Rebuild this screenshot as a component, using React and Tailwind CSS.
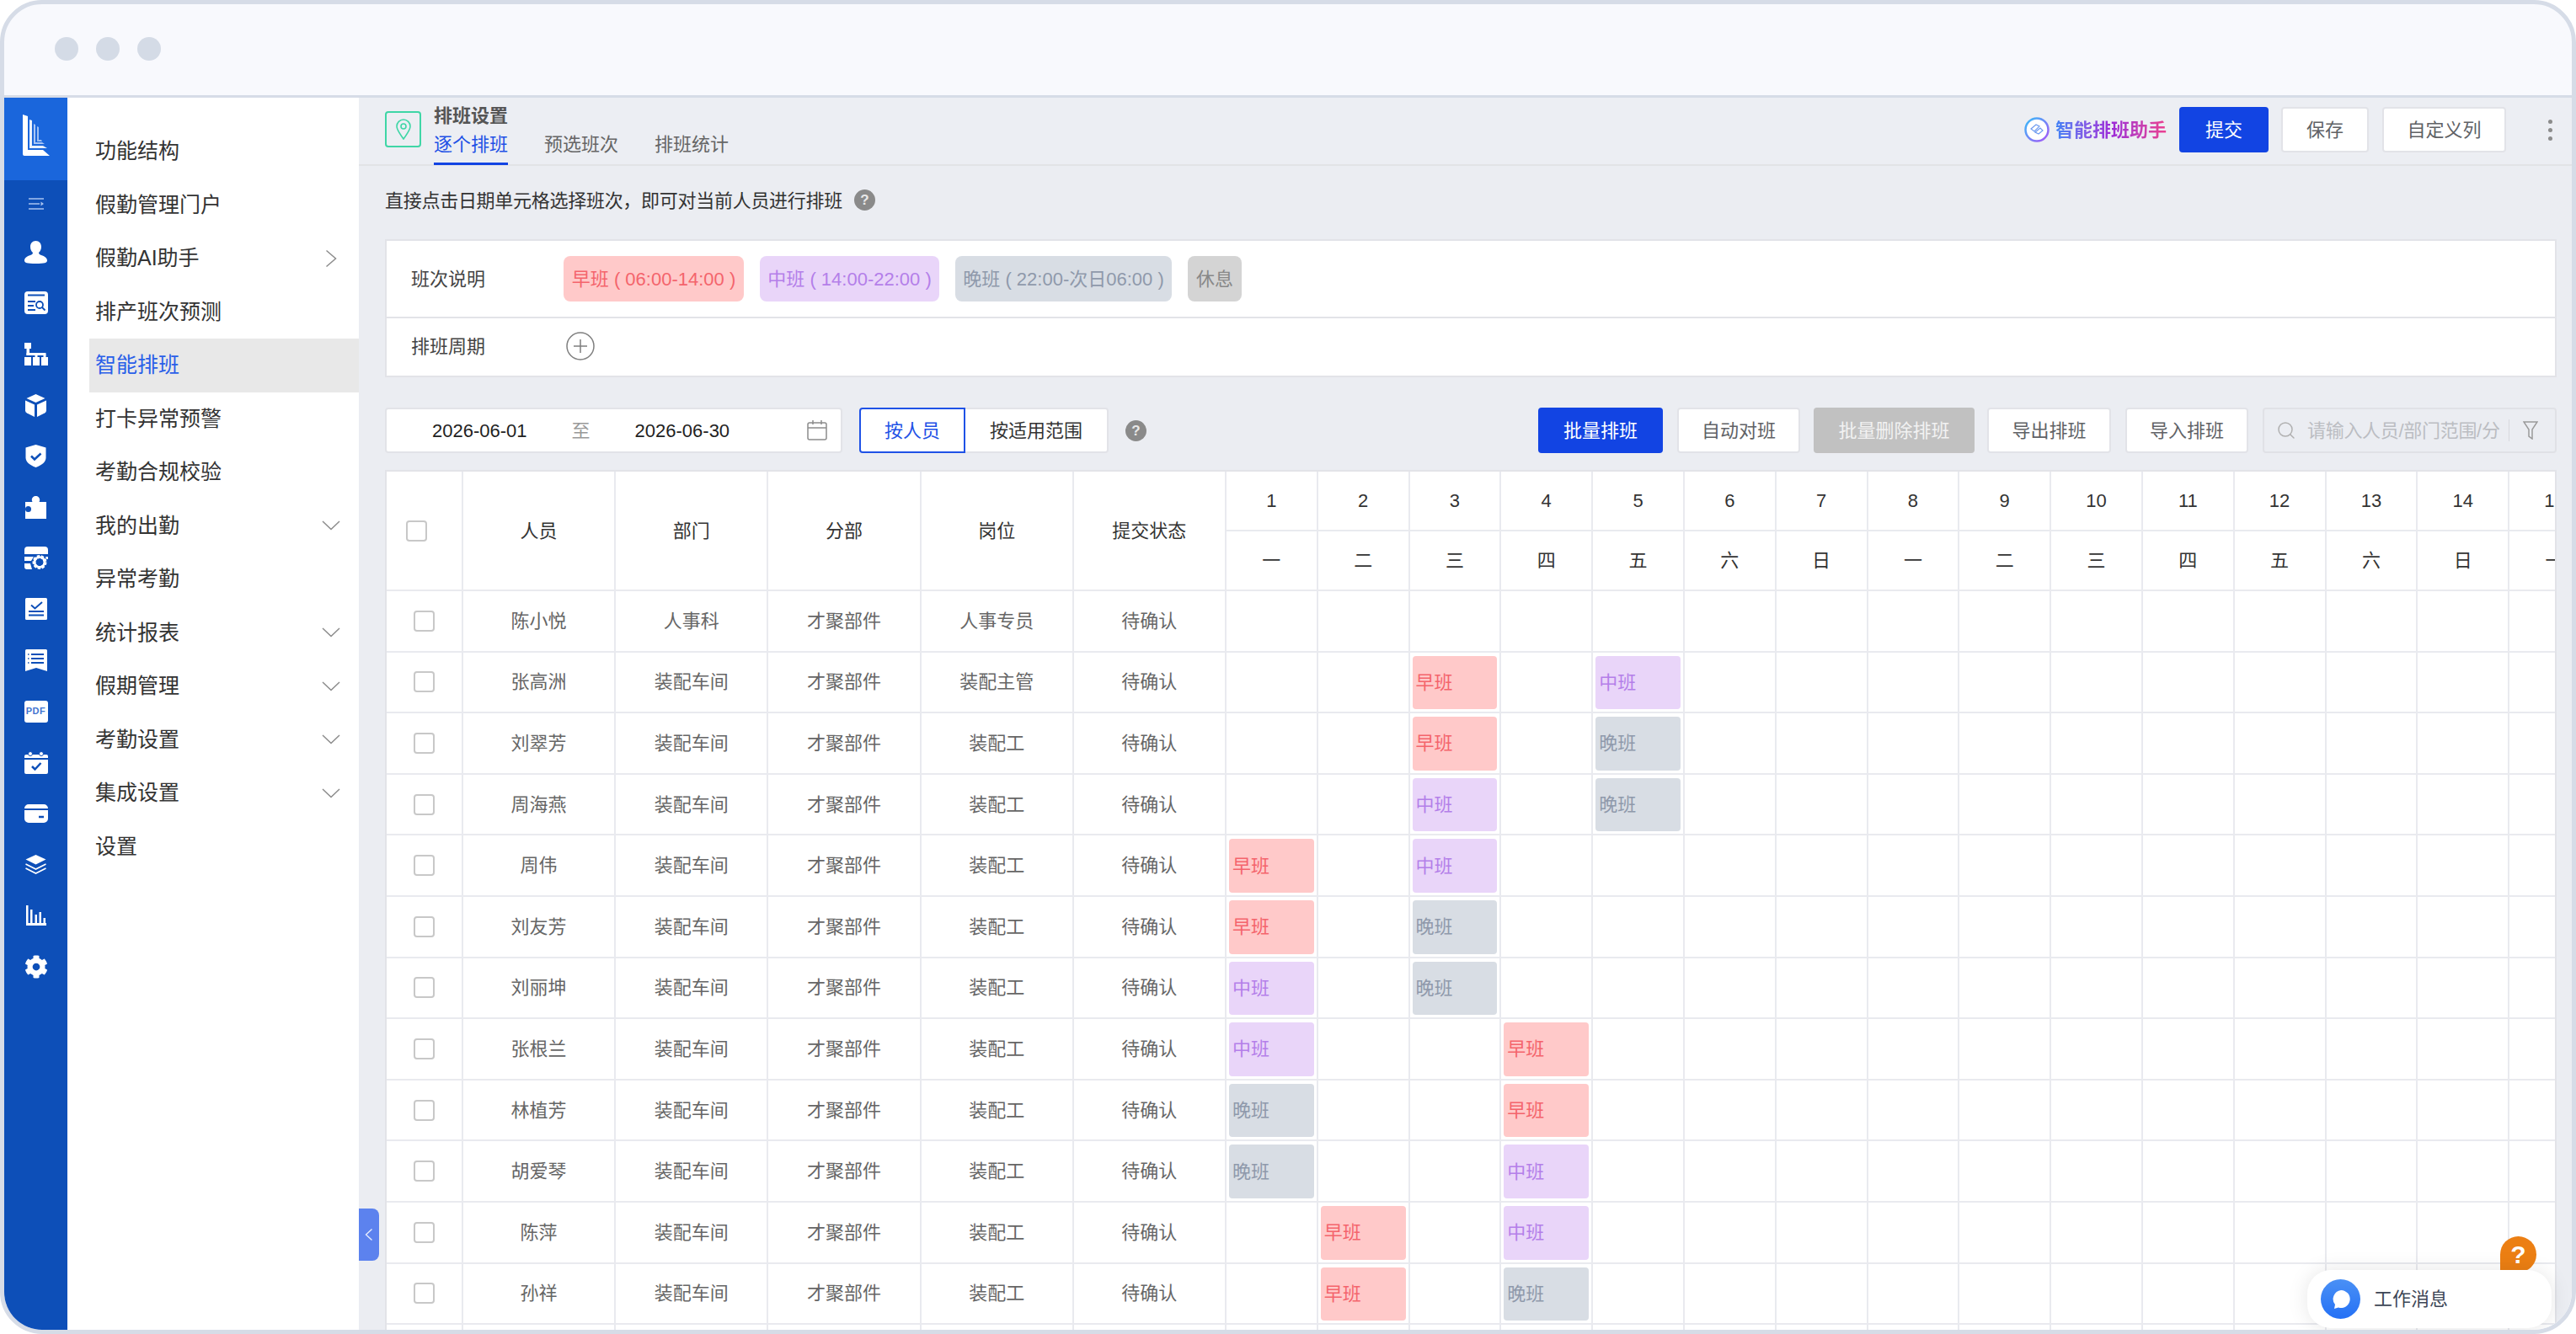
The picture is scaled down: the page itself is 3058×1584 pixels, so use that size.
import { Search } from 'lucide-react';
import { FaCog } from 'react-icons/fa';

const BLUE = '#0d4fb8';

const Logo = () => (
  <svg width="33" height="50" viewBox="0 0 33 50">
    <path d="M0 0l6 2v40h18l8 7H2a2 2 0 0 1-2-2z" fill="#fff" />
    <path d="M8 6l3 1v30h13l5 3H8z" fill="#fff" opacity="0.9" />
    <path d="M13 11l2 1v21h8l3 2H13z" fill="#a9c6f5" />
    <path d="M17 14l2 1v15h3l1 2h-6z" fill="#d6e4fb" opacity="0.7" />
  </svg>
);

const railIcons = [
  <svg key="person" width="27" height="27" viewBox="0 0 27 27" fill="#fff">
    <path d="M13.5 0c4 0 6.5 3 6.5 7 0 3-1.2 5.4-3 7 0 1.4 1 2.2 3 3 3.800 1.400 7 3 7 6.500 0 2.500-3 3.500-13.500 3.500S0 26 0 23.500C0 20 3.200 18.400 7 17c2-.8 3-1.600 3-3-1.800-1.600-3-4-3-7 0-4 2.500-7 6.500-7z" />
  </svg>,
  <svg key="doc" width="28" height="28" viewBox="0 0 28 28">
    <rect width="28" height="27" rx="4" fill="#fff" />
    <path d="M4 4.500h20M4 12h9M4 17h7M4 22h9" stroke={BLUE} strokeWidth="1.800" />
    <circle cx="18" cy="16" r="4" fill="none" stroke={BLUE} strokeWidth="1.800" />
    <path d="M21 19l3.500 3.500" stroke={BLUE} strokeWidth="1.800" />
  </svg>,
  <svg key="org" width="28" height="27" viewBox="0 0 28 27" fill="#fff">
    <rect width="8" height="7" />
    <rect x="2.500" y="6" width="3.500" height="9" />
    <rect x="2.500" y="12" width="23" height="3" />
    <rect y="17" width="8" height="10" />
    <rect x="10" y="17" width="8" height="10" />
    <rect x="20" y="17" width="8" height="10" />
    <rect x="12.500" y="14" width="3" height="4" />
    <rect x="22.500" y="14" width="3" height="4" />
  </svg>,
  <svg key="cube" width="25" height="27" viewBox="0 0 25 27" fill="#fff">
    <path d="M12.500 0l11 5-11 5-11-5z" />
    <path d="M0 7.500l11 5V27L2 22.500Q0 21.500 0 19.500z" />
    <path d="M25 7.500l-11 5V27l9-4.500q2-1 2-3z" />
  </svg>,
  <svg key="shield" width="25" height="27" viewBox="0 0 25 27">
    <path d="M12.500 0l12 3.500v12c0 5-5 9-12 11.500C5.500 24.500.5 20.500.5 15.500v-12z" fill="#fff" />
    <path d="M7 13.500l4 4 7.500-7" fill="none" stroke={BLUE} strokeWidth="2.500" />
  </svg>,
  <svg key="puzzle" width="25" height="27" viewBox="0 0 25 27">
    <path d="M0 7h8.500c-.5-1-.7-1.800-.7-2.500C7.800 2 10 0 12.500 0s4.700 2 4.700 4.500c0 .7-.2 1.500-.7 2.500H25v20H0z" fill="#fff" />
    <circle cx="3.500" cy="15.500" r="3.500" fill={BLUE} />
  </svg>,
  <svg key="cardgear" width="28" height="27" viewBox="0 0 28 27">
    <path d="M0 9V4a4 4 0 0 1 4-4h20a4 4 0 0 1 4 4v5z" fill="#fff" />
    <path d="M0 12h11l-3 5H0zM0 20h7l2 7H3a3 3 0 0 1-3-3z" fill="#fff" />
    <circle cx="18" cy="18.500" r="6.500" fill="none" stroke="#fff" strokeWidth="4" strokeDasharray="3 1.500" />
    <circle cx="18" cy="18.500" r="6" fill="none" stroke="#fff" strokeWidth="2.500" />
    <path d="M25 12h3v3h-2z" fill="#fff" />
  </svg>,
  <svg key="check" width="26" height="26" viewBox="0 0 26 26">
    <rect width="26" height="26" rx="1.500" fill="#fff" />
    <path d="M7 8.500l4.500 4L20 5" fill="none" stroke={BLUE} strokeWidth="2" />
    <path d="M4 16h18M4 20.500h18" stroke={BLUE} strokeWidth="2" />
  </svg>,
  <svg key="list" width="26" height="26" viewBox="0 0 26 26">
    <path d="M0 1.500Q0 0 1.500 0h23Q26 0 26 1.500V26l-13-4-13 4z" fill="#fff" />
    <path d="M7 6h15M7 11h15M7 16h15" stroke={BLUE} strokeWidth="2.200" />
    <path d="M3 6h1.500M3 11h1.500M3 16h1.500" stroke={BLUE} strokeWidth="1.500" />
  </svg>,
  <div key="pdf" className="flex h-[26px] w-[28px] items-center justify-center rounded-[3px] bg-white text-[11px] leading-none font-bold tracking-[0.5px] text-[#3f74d0]">PDF</div>,
  <svg key="cal" width="28" height="27" viewBox="0 0 28 27">
    <path d="M0 6a2 2 0 0 1 2-2h24a2 2 0 0 1 2 2v2H0zM0 10h28v15a2 2 0 0 1-2 2H2a2 2 0 0 1-2-2z" fill="#fff" />
    <circle cx="7" cy="3" r="2.500" fill="#fff" stroke={BLUE} />
    <circle cx="20" cy="3" r="2.500" fill="#fff" stroke={BLUE} />
    <path d="M9 18l3.500 3.500L19.500 14" fill="none" stroke={BLUE} strokeWidth="2.500" />
  </svg>,
  <svg key="card" width="28" height="22" viewBox="0 0 28 22">
    <path d="M0 5a5 5 0 0 1 5-5h18a5 5 0 0 1 5 5H0zM0 7h28v10a5 5 0 0 1-5 5H5a5 5 0 0 1-5-5z" fill="#fff" />
    <path d="M17 15h6" stroke={BLUE} strokeWidth="2.500" />
  </svg>,
  <svg key="layers" width="25" height="23" viewBox="0 0 25 23" fill="none">
    <path d="M12.500 0l12 5.500-12 6-12-6z" fill="#fff" />
    <path d="M.5 11l12 6 12-6M.5 16l12 6 12-6" stroke="#fff" strokeWidth="1.600" />
  </svg>,
  <svg key="chart" width="24" height="24" viewBox="0 0 24 24" fill="#fff">
    <path d="M0 0h2.500v21H24v3H0z" />
    <rect x="5" y="5" width="2.500" height="16" />
    <rect x="10.500" y="11" width="2.500" height="10" />
    <rect x="15.500" y="8" width="2.500" height="13" />
    <rect x="20.500" y="15" width="2.500" height="6" />
  </svg>,
  <FaCog key="gear" size={28} color="#fff" />,
];

const Rail = () => (
  <div className="flex h-full w-[75px] shrink-0 flex-col bg-[#0d4fb8]">
    <div className="flex h-[98px] items-start justify-center bg-[#1a66dc] pt-[20px] pl-[2px]">
      <Logo />
    </div>
    <div className="flex h-[55px] items-center justify-center">
      <svg width="18" height="14" viewBox="0 0 18 14" fill="none">
        <path d="M0 1h18M0 7h13M0 13h18" stroke="#a8c3ef" strokeWidth="1.600" />
        <path d="M14.500 4.500L18 7l-3.500 2.500z" fill="#a8c3ef" />
      </svg>
    </div>
    {railIcons.map((icon) => (
      <div key={icon.key} className="flex h-[60.6px] items-center justify-center">
        {icon}
      </div>
    ))}
  </div>
);

const menuItems = [
  { label: '功能结构' },
  { label: '假勤管理门户' },
  { label: '假勤AI助手', arrow: 'right' },
  { label: '排产班次预测' },
  { label: '智能排班', active: true },
  { label: '打卡异常预警' },
  { label: '考勤合规校验' },
  { label: '我的出勤', arrow: 'down' },
  { label: '异常考勤' },
  { label: '统计报表', arrow: 'down' },
  { label: '假期管理', arrow: 'down' },
  { label: '考勤设置', arrow: 'down' },
  { label: '集成设置', arrow: 'down' },
  { label: '设置' },
];

const Menu = () => (
  <div className="h-full w-[346px] shrink-0 bg-white pt-[32px]">
    {menuItems.map((item) => (
      <div
        key={item.label}
        className={`flex h-[63.5px] items-center text-[25px] ${
          item.active ? 'ml-[26px] bg-[#e8e8e8] pl-[7px] text-[#2a5fe8]' : 'pl-[33px] text-[#333]'
        }`}
      >
        <span>{item.label}</span>
        {item.arrow === 'right' && (
          <svg className="ml-auto mr-[26px]" width="14" height="22" viewBox="0 0 14 22" fill="none">
            <path d="M1.500 1.500L12.500 11 1.500 20.500" stroke="#8c8c8c" strokeWidth="1.500" />
          </svg>
        )}
        {item.arrow === 'down' && (
          <svg className="ml-auto mr-[22px]" width="22" height="12" viewBox="0 0 22 12" fill="none">
            <path d="M1 1l10 9.500L21 1" stroke="#8c8c8c" strokeWidth="1.500" />
          </svg>
        )}
      </div>
    ))}
  </div>
);

const HelpDot = () => (
  <div className="flex h-[25px] w-[25px] items-center justify-center rounded-full bg-[#8a8a8a] text-[17px] leading-none font-bold text-[#e8e8e8]">?</div>
);

const Header = () => (
  <div className="flex h-[81px] shrink-0 border-b-2 border-[#e2e3e6] bg-[#eceef3] pl-[31px] pr-[23px]">
    <div className="mt-[16px] flex h-[43px] w-[43px] items-center justify-center rounded-[4px] border-2 border-[#3fd6a6]">
      <svg width="18" height="25" viewBox="0 0 18 25" fill="none" stroke="#3fd6a6" strokeWidth="1.600">
        <path d="M9 24C5 18 1 13.500 1 9a8 8 0 0 1 16 0c0 4.500-4 9-8 15z" />
        <circle cx="9" cy="9" r="3" />
      </svg>
    </div>
    <div className="ml-[15px] flex flex-col pt-[8px]">
      <div className="text-[22px] leading-[28px] font-semibold text-[#555]">排班设置</div>
      <div className="mt-[6px] flex gap-[43px] text-[22px] leading-[28px] text-[#666]">
        <div className="h-[38px] border-b-[3px] border-[#1244e3] text-[#1f52e6]">逐个排班</div>
        <div>预选班次</div>
        <div>排班统计</div>
      </div>
    </div>
    <div className="ml-auto mt-[11px] flex h-[54px] items-center">
      <svg width="30" height="30" viewBox="0 0 30 30" fill="none">
        <defs>
          <linearGradient id="aiRing" x1="0" y1="0" x2="1" y2="1">
            <stop offset="0" stopColor="#38bdf8" />
            <stop offset="1" stopColor="#a855f7" />
          </linearGradient>
        </defs>
        <circle cx="15" cy="15" r="13.500" fill="#fff" stroke="url(#aiRing)" strokeWidth="2.500" />
        <path d="M8 14l6-5 4 2-6 6zM13 18l6-5 3 3-5 4z" stroke="#6f9cf0" strokeWidth="1.200" />
      </svg>
      <span className="ml-[7px] bg-linear-to-r from-[#3b82f6] via-[#9c27d8] to-[#ec3f8f] bg-clip-text text-[22px] font-bold text-transparent">智能排班助手</span>
      <button className="ml-[15px] h-[54px] w-[106px] rounded-[4px] bg-[#1244e3] text-[22px] text-white">提交</button>
      <button className="ml-[15px] h-[54px] w-[104px] rounded-[4px] border-2 border-[#e2e3e8] bg-white text-[22px] text-[#606266]">保存</button>
      <button className="ml-[16px] h-[54px] w-[147px] rounded-[4px] border-2 border-[#e2e3e8] bg-white text-[22px] text-[#606266]">自定义列</button>
      <div className="ml-[50px] flex flex-col gap-[5px]">
        <div className="h-[5px] w-[5px] rounded-full bg-[#8c8c8c]" />
        <div className="h-[5px] w-[5px] rounded-full bg-[#8c8c8c]" />
        <div className="h-[5px] w-[5px] rounded-full bg-[#8c8c8c]" />
      </div>
    </div>
  </div>
);

const Legend = () => (
  <div className="h-[164px] shrink-0 border-2 border-[#e2e3e8] bg-white text-[22px] text-[#444]">
    <div className="flex h-[92px] items-center border-b-2 border-[#e2e3e8] pl-[29px]">
      <div className="w-[181px]">班次说明</div>
      <div className="flex h-[54px] gap-[19px]">
        <div className="flex w-[214px] items-center justify-center rounded-[8px] bg-[#ffc9c9] text-[#f4646c]">早班 ( 06:00-14:00 )</div>
        <div className="flex w-[213px] items-center justify-center rounded-[8px] bg-[#e9d5f9] text-[#b47fe9]">中班 ( 14:00-22:00 )</div>
        <div className="flex w-[257px] items-center justify-center rounded-[8px] bg-[#d8dde4] text-[#8f99ab]">晚班 ( 22:00-次日06:00 )</div>
        <div className="flex w-[64px] items-center justify-center rounded-[8px] bg-[#d4d4d4] text-[#888]">休息</div>
      </div>
    </div>
    <div className="flex h-[66px] items-center pl-[29px]">
      <div className="w-[184px]">排班周期</div>
      <svg width="34" height="34" viewBox="0 0 34 34" fill="none" stroke="#7f7f7f" strokeWidth="1.500">
        <circle cx="17" cy="17" r="16" />
        <path d="M17 9v16M9 17h16" />
      </svg>
    </div>
  </div>
);

const outlineBtn = 'h-[54px] rounded-[4px] border-2 border-[#e2e3e8] bg-white text-[22px] text-[#606266]';

const Toolbar = () => (
  <div className="mt-[36px] flex h-[54px] shrink-0 items-center text-[22px]">
    <div className="flex h-[54px] w-[543px] items-center rounded-[4px] border-2 border-[#e2e3e8] bg-white pl-[54px] text-[#222]">
      <span>2026-06-01</span>
      <span className="ml-[53px] text-[#999]">至</span>
      <span className="ml-[53px]">2026-06-30</span>
      <svg className="ml-[92px]" width="24" height="24" viewBox="0 0 24 24" fill="none" stroke="#8c8c8c" strokeWidth="1.500">
        <rect x="1" y="3" width="22" height="20" rx="2" />
        <path d="M1 9h22M7 0v5M17 0v5" />
      </svg>
    </div>
    <div className="ml-[20px] flex h-[54px]">
      <div className="flex w-[126px] items-center justify-center rounded-l-[4px] border-2 border-[#1f52e6] bg-white text-[#1f52e6]">按人员</div>
      <div className="flex w-[170px] items-center justify-center rounded-r-[4px] border-y-2 border-r-2 border-[#e2e3e8] bg-white text-[#333]">按适用范围</div>
    </div>
    <div className="ml-[20px]">
      <HelpDot />
    </div>
    <div className="ml-auto flex items-center">
      <button className="h-[54px] w-[148px] rounded-[4px] bg-[#1244e3] text-white">批量排班</button>
      <button className={`ml-[17px] w-[146px] ${outlineBtn}`}>自动对班</button>
      <button className="ml-[16px] h-[54px] w-[191px] rounded-[4px] bg-[#c1c1c1] text-[#f2f2f2]">批量删除排班</button>
      <button className={`ml-[15px] w-[147px] ${outlineBtn}`}>导出排班</button>
      <button className={`ml-[17px] w-[146px] ${outlineBtn}`}>导入排班</button>
      <div className="ml-[17px] flex h-[54px] w-[349px] items-center rounded-[4px] border-2 border-[#e0e1e6] bg-[#ebedf2] pl-[14px]">
        <Search size={24} strokeWidth={1.500} color="#b0b0b0" className="shrink-0" />
        <span className="ml-[13px] shrink-0 whitespace-nowrap tracking-[-0.3px] text-[#bbbdc2]">请输入人员/部门范围/分</span>
        <div className="ml-[10px] h-[26px] w-[1px] shrink-0 bg-[#d8d9de]" />
        <svg className="ml-[16px] shrink-0" width="18" height="22" viewBox="0 0 18 22" fill="none" stroke="#9a9a9a" strokeWidth="1.500">
          <path d="M1 1h16l-6 9v11l-4-3v-8z" />
        </svg>
      </div>
    </div>
  </div>
);

const columns = ['人员', '部门', '分部', '岗位', '提交状态'];
const weekdays = ['一', '二', '三', '四', '五', '六', '日'];
const days = Array.from({ length: 15 }, (_, i) => i + 1);

const rows = [
  { name: '陈小悦', dept: '人事科', post: '人事专员', shifts: {} },
  { name: '张高洲', dept: '装配车间', post: '装配主管', shifts: { 3: '早班', 5: '中班' } },
  { name: '刘翠芳', dept: '装配车间', post: '装配工', shifts: { 3: '早班', 5: '晚班' } },
  { name: '周海燕', dept: '装配车间', post: '装配工', shifts: { 3: '中班', 5: '晚班' } },
  { name: '周伟', dept: '装配车间', post: '装配工', shifts: { 1: '早班', 3: '中班' } },
  { name: '刘友芳', dept: '装配车间', post: '装配工', shifts: { 1: '早班', 3: '晚班' } },
  { name: '刘丽坤', dept: '装配车间', post: '装配工', shifts: { 1: '中班', 3: '晚班' } },
  { name: '张根兰', dept: '装配车间', post: '装配工', shifts: { 1: '中班', 4: '早班' } },
  { name: '林植芳', dept: '装配车间', post: '装配工', shifts: { 1: '晚班', 4: '早班' } },
  { name: '胡爱琴', dept: '装配车间', post: '装配工', shifts: { 1: '晚班', 4: '中班' } },
  { name: '陈萍', dept: '装配车间', post: '装配工', shifts: { 2: '早班', 4: '中班' } },
  { name: '孙祥', dept: '装配车间', post: '装配工', shifts: { 2: '早班', 4: '晚班' } },
];

const shiftStyle = {
  早班: 'bg-[#ffc9c9] text-[#f4646c]',
  中班: 'bg-[#e9d5f9] text-[#b47fe9]',
  晚班: 'bg-[#d8dde4] text-[#8f99ab]',
};

const cell = 'flex items-center justify-center border-r-2 border-b-2 border-[#e9eaef]';

const Checkbox = () => (
  <div className="h-[25px] w-[25px] rounded-[4px] border-2 border-[#c8c8c8] bg-white" />
);

const ScheduleTable = () => (
  <div className="mt-[20px] min-h-0 flex-1 overflow-hidden border-x-2 border-t-2 border-[#e2e3e8] bg-white text-[22px]">
    <div className="grid grid-cols-[91px_repeat(5,181.2px)_repeat(15,108.8px)] grid-rows-[71px_71px] auto-rows-[72.6px] text-[#333]">
      <div className={`${cell} row-span-2 !justify-start pl-[23px]`}>
        <Checkbox />
      </div>
      {columns.map((col) => (
        <div key={col} className={`${cell} row-span-2`}>{col}</div>
      ))}
      {days.map((d) => (
        <div key={d} className={cell}>{d}</div>
      ))}
      {days.map((d) => (
        <div key={d} className={cell}>{weekdays[(d - 1) % 7]}</div>
      ))}
      {rows.map((row) => (
        <div key={row.name} className="contents text-[#666]">
          <div className={cell}><Checkbox /></div>
          <div className={cell}>{row.name}</div>
          <div className={cell}>{row.dept}</div>
          <div className={cell}>才聚部件</div>
          <div className={cell}>{row.post}</div>
          <div className={cell}>待确认</div>
          {days.map((d) => (
            <div key={d} className={`${cell} px-[3px] pt-[4px] pb-[3px]`}>
              {row.shifts[d] && (
                <div className={`flex h-full w-full items-center rounded-[4px] pl-[4px] ${shiftStyle[row.shifts[d]]}`}>
                  {row.shifts[d]}
                </div>
              )}
            </div>
          ))}
        </div>
      ))}
      {Array.from({ length: 21 }, (_, i) => (
        <div key={i} className={cell} />
      ))}
    </div>
  </div>
);

export default function App() {
  return (
    <div className="h-[1584px] w-[3058px] overflow-hidden bg-white font-['Liberation_Sans','Noto_Sans_CJK_SC',sans-serif]">
      <div className="relative flex h-full w-full flex-col overflow-hidden rounded-[50px] border-[5px] border-[#d6dce7] bg-[#f8f9fd]">
        {/* window chrome */}
        <div className="flex h-[111px] shrink-0 items-center gap-[21px] border-b-[3px] border-[#d6dce7] pb-[3px] pl-[60px]">
          <div className="h-[28px] w-[28px] rounded-full bg-[#d4dbe6]" />
          <div className="h-[28px] w-[28px] rounded-full bg-[#d4dbe6]" />
          <div className="h-[28px] w-[28px] rounded-full bg-[#d4dbe6]" />
        </div>

        <div className="flex min-h-0 flex-1">
          <Rail />
          <Menu />
          <div className="flex min-w-0 flex-1 flex-col bg-[#ebedf2]">
            <Header />
            <div className="flex min-h-0 flex-1 flex-col pl-[31px] pr-[18px]">
              <div className="flex h-[87px] shrink-0 items-start gap-[14px] pt-[28px] text-[22px] text-[#333]">
                <span className="leading-[28px] tracking-[-0.28px]">直接点击日期单元格选择班次，即可对当前人员进行排班</span>
                <HelpDot />
              </div>
              <Legend />
              <Toolbar />
              <ScheduleTable />
            </div>
          </div>
        </div>

        {/* collapse handle */}
        <div className="absolute left-[421px] top-[1430px] flex h-[62px] w-[24px] items-center justify-center rounded-r-[8px] bg-[#5c82ee]">
          <svg width="10" height="16" viewBox="0 0 10 16" fill="none" stroke="#e6ecfd" strokeWidth="1.400">
            <path d="M8.500 1.500L1.500 8l7 6.500" />
          </svg>
        </div>

        {/* help bubble */}
        <div className="absolute left-[2963px] top-[1463px] flex h-[43px] w-[43px] items-center justify-center rounded-full rounded-bl-[6px] bg-[#ec7f13] text-[30px] leading-none font-bold text-white">?</div>

        {/* message pill */}
        <div className="absolute left-[2734px] top-[1503px] flex h-[69px] w-[290px] items-center rounded-[28px] bg-white pl-[16px] shadow-[0_0_24px_rgba(0,0,0,0.1)]">
          <div className="flex h-[47px] w-[47px] items-center justify-center rounded-full bg-linear-to-b from-[#4a90f5] to-[#2470f5]">
            <svg width="22" height="22" viewBox="0 0 22 22" fill="#fff">
              <path d="M11 0a10.500 10.500 0 1 1-3 20.500L3 22l1-5A10.500 10.500 0 0 1 11 0z" />
            </svg>
          </div>
          <span className="ml-[16px] text-[22px] text-[#3d4656]">工作消息</span>
        </div>
      </div>
    </div>
  );
}
